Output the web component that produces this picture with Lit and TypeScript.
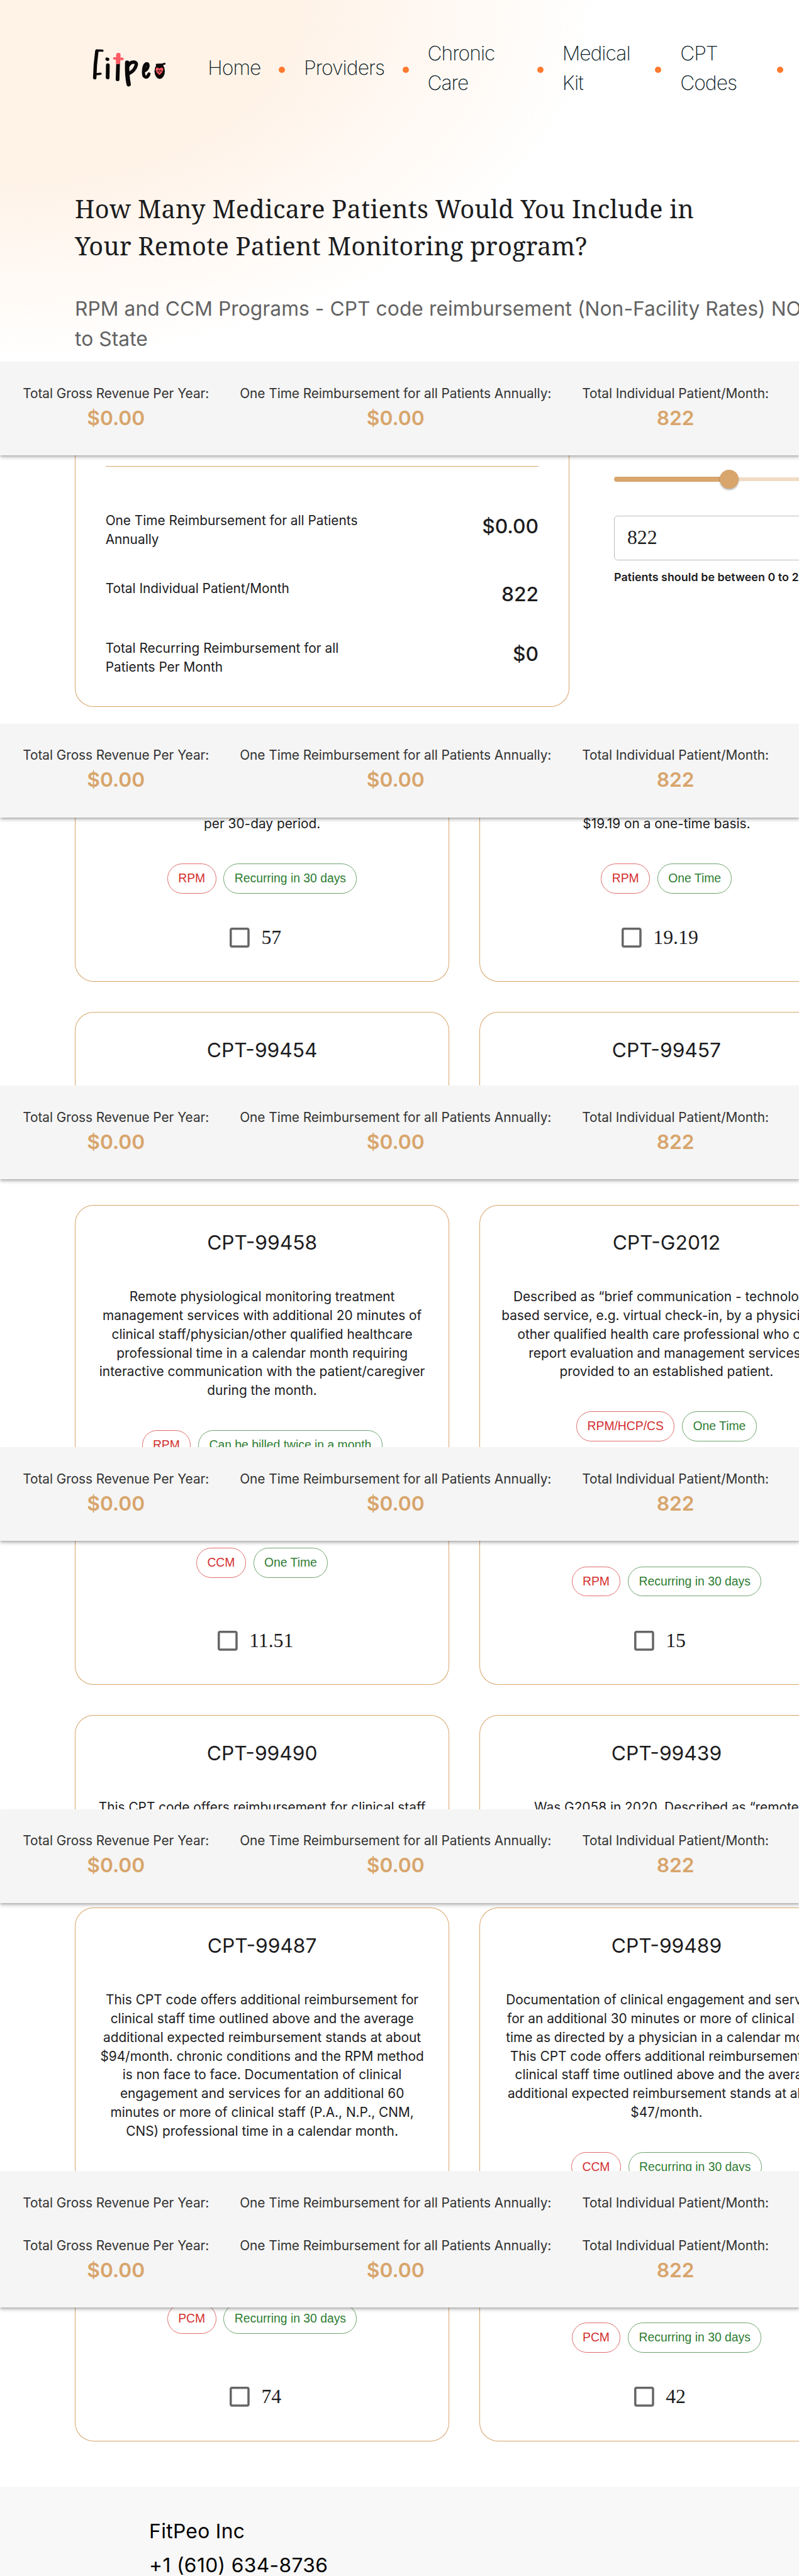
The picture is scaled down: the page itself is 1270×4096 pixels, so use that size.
import { LitElement, html, css, nothing } from "lit";
import { customElement, property } from "lit/decorators.js";

@customElement("totals-bar")
class TotalsBar extends LitElement {
  @property({ type: Boolean, reflect: true }) short = false;
  static styles = css`
    :host { display: block; position: relative; z-index: 2; height: 150px; background: #f5f5f5; clip-path: inset(0 0 -20px 0);
      box-shadow: 0 2px 4px -1px rgba(0,0,0,.2), 0 4px 5px 0 rgba(0,0,0,.14), 0 1px 10px 0 rgba(0,0,0,.12); }
    :host([short]) { height: 69px; box-shadow: none; clip-path: none; }
    .row { display: flex; gap: 49.3px; padding: 36px 0 0 36.5px; white-space: nowrap; }
    .item { display: flex; flex-direction: column; align-items: center; }
    .label { font-size: 21px; line-height: 30px; letter-spacing: -.05px; color: #333; }
    .value { font-size: 32px; line-height: 48px; font-weight: 600; color: #d8a56c; }
  `;
  render() {
    const items = [
      ["Total Gross Revenue Per Year:", "$0.00"],
      ["One Time Reimbursement for all Patients Annually:", "$0.00"],
      ["Total Individual Patient/Month:", "822"],
    ];
    return html`<div class="row">${items.map(([l, v]) => html`<div class="item">
      <span class="label">${l}</span>${this.short ? nothing : html`<span class="value">${v}</span>`}</div>`)}</div>`;
  }
}

@customElement("cpt-card")
class CptCard extends LitElement {
  @property() heading = "";
  @property() tag = "";
  @property() billing = "";
  @property() amount = "";
  @property({ type: Boolean, reflect: true }) loose = false;
  @property({ attribute: false }) lines: string[] = [];
  static styles = css`
    :host { display: flex; flex-direction: column; align-items: center; box-sizing: border-box; width: 600px; height: 100%;
      border: 0 solid #d8a56c; border-width: 0 1px; overflow: hidden; flex: none; }
    :host([heading]) { border-top-width: 1px; border-radius: 30px 30px 0 0; }
    :host([amount]) { border-bottom-width: 1px; border-radius: 0 0 30px 30px; justify-content: flex-end; }
    .heading, .text, .chips, .check { flex: none; }
    .heading { font-size: 32px; line-height: 48px; margin: 36px 0 48px; color: #1c1c1e; font-weight: 400; }
    .text { display: flex; flex-direction: column; align-items: center; font-size: 21px; line-height: 30px; color: #1c1c1e; white-space: nowrap; }
    .chips { display: flex; gap: 12px; margin-top: 48.5px; }
    .chip { box-sizing: border-box; height: 48px; border: 1px solid; border-radius: 24px; padding: 0 16.5px; line-height: 46px;
      font-family: "Liberation Sans", sans-serif; font-size: 19.5px; white-space: nowrap; }
    .red { color: #d32f2f; border-color: #e26d6d; }
    .green { color: #2e7d32; border-color: #6da470; }
    .check { display: flex; align-items: center; gap: 18.5px; height: 32px; margin: 55px 0 54px; padding-right: 21px;
      font-family: "Liberation Serif", serif; font-size: 32px; line-height: 32px; color: #1c1c1e; }
    :host([loose]) .check { margin-top: 85px; }
    .box { width: 32px; height: 32px; fill: #666; }
  `;
  render() {
    return html`
      ${this.heading ? html`<div class="heading">${this.heading}</div>` : nothing}
      ${this.lines.length ? html`<div class="text">${this.lines.map((l) => html`<span>${l}</span>`)}</div>` : nothing}
      ${this.tag ? html`<div class="chips"><span class="chip red">${this.tag}</span><span class="chip green">${this.billing}</span></div>` : nothing}
      ${this.amount ? html`<div class="check"><svg class="box" viewBox="3 3 18 18"><path d="M19 5v14H5V5h14m0-2H5c-1.100 0-2 .9-2 2v14c0 1.100.9 2 2 2h14c1.100 0 2-.9 2-2V5c0-1.100-.9-2-2-2z"/></svg><span>${this.amount}</span></div>` : nothing}
    `;
  }
}

@customElement("app-root")
class AppRoot extends LitElement {
  static styles = css`
    :host { display: block; width: 100%; overflow: hidden; background: #fff; font-family: Inter, sans-serif; }
    .page { zoom: 0.992; width: 1281px; height: 4129px; overflow: hidden; background: #fff; }
    .hero { height: 580px; box-sizing: border-box; padding: 59px 0 0 120px; overflow: hidden;
      background: radial-gradient(ellipse 960px 580px at 0 0, #fff2e6 0, #fff3e8 50%, #fff8f2 72%, #fff 100%); }
    .nav { display: flex; align-items: center; height: 100px; font-size: 32px; line-height: 48px; font-weight: 200; letter-spacing: -.95px; color: #0a1c26; }
    .logo { width: 120px; height: 66px; margin: 0 66px 0 27px; flex: none; }
    .link { flex: none; }
    .dot { width: 10px; height: 10px; border-radius: 50%; background: #ff7a2e; flex: none; margin: 5px 30px 0 0; }
    .l1 { width: 114px; } .l2 { width: 158px; } .l3 { width: 176px; } .l4 { width: 149px; } .l5 { width: 155px; }
    h1 { margin: 146px 0 0; font: 400 40px/60px "Noto Serif", "Liberation Serif", serif; letter-spacing: .27px; color: #1c1c1e; white-space: nowrap; }
    .sub { margin-top: 46px; font-size: 32px; line-height: 48px; letter-spacing: .06px; color: #636363; white-space: nowrap; }
    .calc { display: flex; height: 430px; padding-left: 120px; }
    .summary { box-sizing: border-box; width: 792px; height: 403px; border: 1px solid #d8a56c; border-top: 0; border-radius: 0 0 30px 30px; padding: 17px 48px 0; flex: none; }
    .rule { height: 1px; background: #d8a56c; }
    .line { display: flex; justify-content: space-between; font-size: 21px; line-height: 30px; color: #1c1c1e; white-space: nowrap; }
    .line strong { font-size: 32px; line-height: 48px; font-weight: 500; }
    .first { margin-top: 72px; height: 108px; } .second { height: 96px; }
    .control { margin-left: 72px; padding-top: 18px; flex: none; width: 400px; }
    .slider { display: flex; align-items: center; height: 40px; }
    .fill { width: 184px; height: 8px; border-radius: 4px; background: #d8a56c; }
    .thumb { width: 30px; height: 30px; border-radius: 50%; background: #d8a56c; margin: 0 -15px; z-index: 1; box-shadow: 0 2px 3px rgba(0,0,0,.3); }
    .rest { flex: 1; height: 6px; background: #f0dcc5; }
    .field { box-sizing: border-box; margin-top: 39px; height: 71px; border: 1px solid #bdbdbd; border-radius: 6px; padding-left: 20px; font: 32px/69px "Liberation Serif", serif; color: #1c1c1e; }
    .hint { margin-top: 15px; font-size: 18px; line-height: 24px; letter-spacing: .05px; font-weight: 600; color: #1c1c1e; white-space: nowrap; }
    .cards { display: flex; gap: 48px; padding-left: 120px; }
    .h264 { height: 264px; } .h118 { height: 118px; margin-top: 48px; } .h389 { height: 389px; margin-top: 41px; }
    .h231 { height: 231px; } .h151 { height: 151px; margin-top: 48px; } .h422 { height: 422px; margin-top: 8px; } .h214 { height: 214px; }
    footer { margin-top: 73px; height: 143px; box-sizing: border-box; background: #f8f8f8; padding: 44.5px 0 0 239px; font-size: 32px; line-height: 54px; letter-spacing: .35px; color: #000; }
  `;
  render() {
    return html`<div class="page">
      <header class="hero">
        <nav class="nav">
          <svg class="logo" viewBox="0 0 120 66" fill="none" stroke="#0a0808" stroke-width="5.500" stroke-linecap="round" stroke-linejoin="round">
            <path d="M8 6.500 Q5 28 4.600 49"/><path d="M7.500 5.200 17 5.600" stroke-width="3.500"/><path d="M5 43.600 14 42.600" stroke-width="3.500"/>
            <path d="M24.200 19 25.500 19.500" stroke-width="5"/><path d="M25.600 29 25.300 48.500" stroke-width="6"/>
            <path d="M42 27 41.200 51.500" stroke-width="6"/>
            <path d="M42.500 12.500 42 24" stroke="#ff5a63" stroke-width="7"/><path d="M36 18 49 18.800" stroke="#ff5a63" stroke-width="4"/>
            <path d="M56.600 25 Q56 45 59 59.500" stroke-width="7"/><path d="M58 30C62 22 73 22 71 29C69 36 64 40 60 42"/>
            <path d="M84 38C90 36 92 27 88 26.500C83 26.500 80 46 86 48C89 48.500 90.500 46 91.500 43" stroke-width="5"/>
            <ellipse cx="108.700" cy="38.500" rx="8.300" ry="12.300" fill="#0a0808" stroke="none"/><path d="M104 28 Q110 29 116.500 26.500" stroke-width="3"/>
            <path d="M108.300 44.500C98 37 102.500 29.500 108.300 34.500C114 29.500 118.500 37 108.300 44.500z" fill="#ff5a63" stroke="none"/>
            <path d="M104 38.500h2l1-2 1.500 5 1.500-5 1 2h2" stroke-width=".8"/>
          </svg>
          <span class="link l1">Home</span><i class="dot"></i>
          <span class="link l2">Providers</span><i class="dot"></i>
          <span class="link l3">Chronic<br>Care</span><i class="dot"></i>
          <span class="link l4">Medical<br>Kit</span><i class="dot"></i>
          <span class="link l5">CPT<br>Codes</span><i class="dot"></i>
        </nav>
        <h1>How Many Medicare Patients Would You Include in<br>Your Remote Patient Monitoring program?</h1>
        <div class="sub">RPM and CCM Programs - CPT code reimbursement (Non-Facility Rates) NOT<br>to State</div>
      </header>
      <totals-bar></totals-bar>
      <section class="calc">
        <div class="summary">
          <div class="rule"></div>
          <div class="line first"><span>One Time Reimbursement for all Patients<br>Annually</span><strong>$0.00</strong></div>
          <div class="line second"><span>Total Individual Patient/Month</span><strong>822</strong></div>
          <div class="line"><span>Total Recurring Reimbursement for all<br>Patients Per Month</span><strong>$0</strong></div>
        </div>
        <div class="control">
          <div class="slider"><div class="fill"></div><div class="thumb"></div><div class="rest"></div></div>
          <div class="field">822</div>
          <div class="hint">Patients should be between 0 to 2000</div>
        </div>
      </section>
      <totals-bar></totals-bar>
      <div class="cards h264">
        <cpt-card .lines=${["per 30-day period."]} tag="RPM" billing="Recurring in 30 days" amount="57"></cpt-card>
        <cpt-card .lines=${["$19.19 on a one-time basis."]} tag="RPM" billing="One Time" amount="19.19"></cpt-card>
      </div>
      <div class="cards h118"><cpt-card heading="CPT-99454"></cpt-card><cpt-card heading="CPT-99457"></cpt-card></div>
      <totals-bar></totals-bar>
      <div class="cards h389">
        <cpt-card heading="CPT-99458" tag="RPM" billing="Can be billed twice in a month" .lines=${[
          "Remote physiological monitoring treatment", "management services with additional 20 minutes of",
          "clinical staff/physician/other qualified healthcare", "professional time in a calendar month requiring",
          "interactive communication with the patient/caregiver", "during the month."]}></cpt-card>
        <cpt-card heading="CPT-G2012" tag="RPM/HCP/CS" billing="One Time" .lines=${[
          "Described as “brief communication - technology-", "based service, e.g. virtual check-in, by a physician or",
          "other qualified health care professional who can", "report evaluation and management services,", "provided to an established patient."]}></cpt-card>
      </div>
      <totals-bar></totals-bar>
      <div class="cards h231">
        <cpt-card loose tag="CCM" billing="One Time" amount="11.51"></cpt-card>
        <cpt-card tag="RPM" billing="Recurring in 30 days" amount="15"></cpt-card>
      </div>
      <div class="cards h151">
        <cpt-card heading="CPT-99490" .lines=${["This CPT code offers reimbursement for clinical staff"]}></cpt-card>
        <cpt-card heading="CPT-99439" .lines=${["Was G2058 in 2020. Described as “remote"]}></cpt-card>
      </div>
      <totals-bar></totals-bar>
      <div class="cards h422">
        <cpt-card heading="CPT-99487" .lines=${[
          "This CPT code offers additional reimbursement for", "clinical staff time outlined above and the average",
          "additional expected reimbursement stands at about", "$94/month. chronic conditions and the RPM method",
          "is non face to face. Documentation of clinical", "engagement and services for an additional 60",
          "minutes or more of clinical staff (P.A., N.P., CNM,", "CNS) professional time in a calendar month."]}></cpt-card>
        <cpt-card heading="CPT-99489" tag="CCM" billing="Recurring in 30 days" .lines=${[
          "Documentation of clinical engagement and services", "for an additional 30 minutes or more of clinical staff",
          "time as directed by a physician in a calendar month.", "This CPT code offers additional reimbursement for",
          "clinical staff time outlined above and the average", "additional expected reimbursement stands at about", "$47/month."]}></cpt-card>
      </div>
      <totals-bar short></totals-bar>
      <totals-bar></totals-bar>
      <div class="cards h214">
        <cpt-card loose tag="PCM" billing="Recurring in 30 days" amount="74"></cpt-card>
        <cpt-card tag="PCM" billing="Recurring in 30 days" amount="42"></cpt-card>
      </div>
      <footer>FitPeo Inc<br>+1 (610) 634-8736</footer>
    </div>`;
  }
}
